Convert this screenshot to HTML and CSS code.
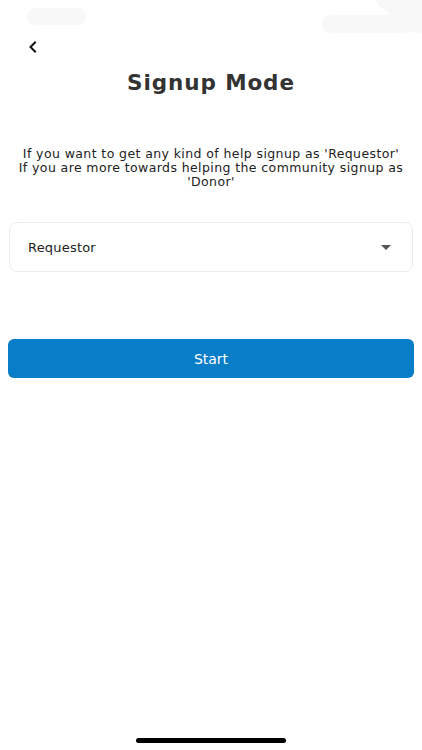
FILE: index.html
```html
<!DOCTYPE html>
<html lang="en">

<head>
    <meta charset="UTF-8">
    <meta name="viewport" content="width=device-width, initial-scale=1.0">
    <title>Signup Mode</title>
    <link rel="stylesheet" href="styles.css">
</head>

<body>
    <div id="screen">
        <div class="status-ghost left"></div>
        <div class="status-ghost right"></div>
        <div class="status-ghost corner"></div>

        <div class="topbar">
            <button class="back" type="button" aria-label="Back">
                <svg width="10" height="12" viewBox="0 0 10 12">
                    <path d="M7 1.5 L2.5 6 L7 10.5" fill="none" stroke="#111" stroke-width="2"
                        stroke-linecap="square" />
                </svg>
            </button>
        </div>

        <h1>Signup Mode</h1>

        <p class="intro">
            If you want to get any kind of help signup as 'Requestor'<br>
            If you are more towards helping the community signup as 'Donor'
        </p>

        <div class="select">
            <span>Requestor</span>
            <svg width="10" height="5" viewBox="0 0 10 5">
                <path d="M0 0 H10 L5 5 Z" fill="#555" />
            </svg>
        </div>

        <button class="start" type="button">Start</button>

        <div class="home-bar"></div>
    </div>
</body>

</html>
```

FILE: styles.css
```css
body {
    font-family: "DejaVu Sans", sans-serif;
    background-color: #fff;
    margin: 0;
    padding: 0;
    color: #222;
}

#screen {
    position: relative;
    height: 750px;
    overflow: hidden;
    display: flex;
    flex-direction: column;
}

.status-ghost {
    position: absolute;
    background-color: #f8f8f8;
    border-radius: 10px;
}

.status-ghost.left {
    left: 27px;
    top: 8px;
    width: 59px;
    height: 17px;
}

.status-ghost.right {
    left: 322px;
    top: 15px;
    width: 90px;
    height: 18px;
}

.status-ghost.corner {
    left: 370px;
    top: -12px;
    width: 70px;
    height: 34px;
    border-radius: 17px;
    transform: rotate(40deg);
}

.topbar {
    height: 40px;
    margin-top: 26px;
}

.back {
    background: none;
    border: none;
    padding: 0;
    margin-left: 27px;
    margin-top: 15px;
    width: 12px;
    height: 12px;
    cursor: pointer;
}

h1 {
    margin: 0;
    text-align: center;
    font-size: 21.5px;
    font-weight: bold;
    letter-spacing: 0.9px;
    color: #333;
    line-height: 34px;
}

.intro {
    margin: 47px 12px 0;
    text-align: center;
    font-size: 12.5px;
    letter-spacing: 0.4px;
    line-height: 14px;
    color: #222;
}

.select {
    margin: 33px 9px 0;
    height: 48px;
    border: 1px solid #ececec;
    border-radius: 8px;
    display: flex;
    align-items: center;
    justify-content: space-between;
    padding: 0 21px 0 18px;
    font-size: 13px;
    letter-spacing: 0.2px;
    color: #222;
}

.start {
    margin: 67px 8px 0;
    height: 39px;
    border: none;
    border-radius: 6px;
    background-color: #087dc8;
    color: #fff;
    font-family: "DejaVu Sans", sans-serif;
    font-size: 14px;
    cursor: pointer;
}

.home-bar {
    position: absolute;
    left: 136px;
    bottom: 7px;
    width: 150px;
    height: 5px;
    border-radius: 3px;
    background-color: #000;
}
```
